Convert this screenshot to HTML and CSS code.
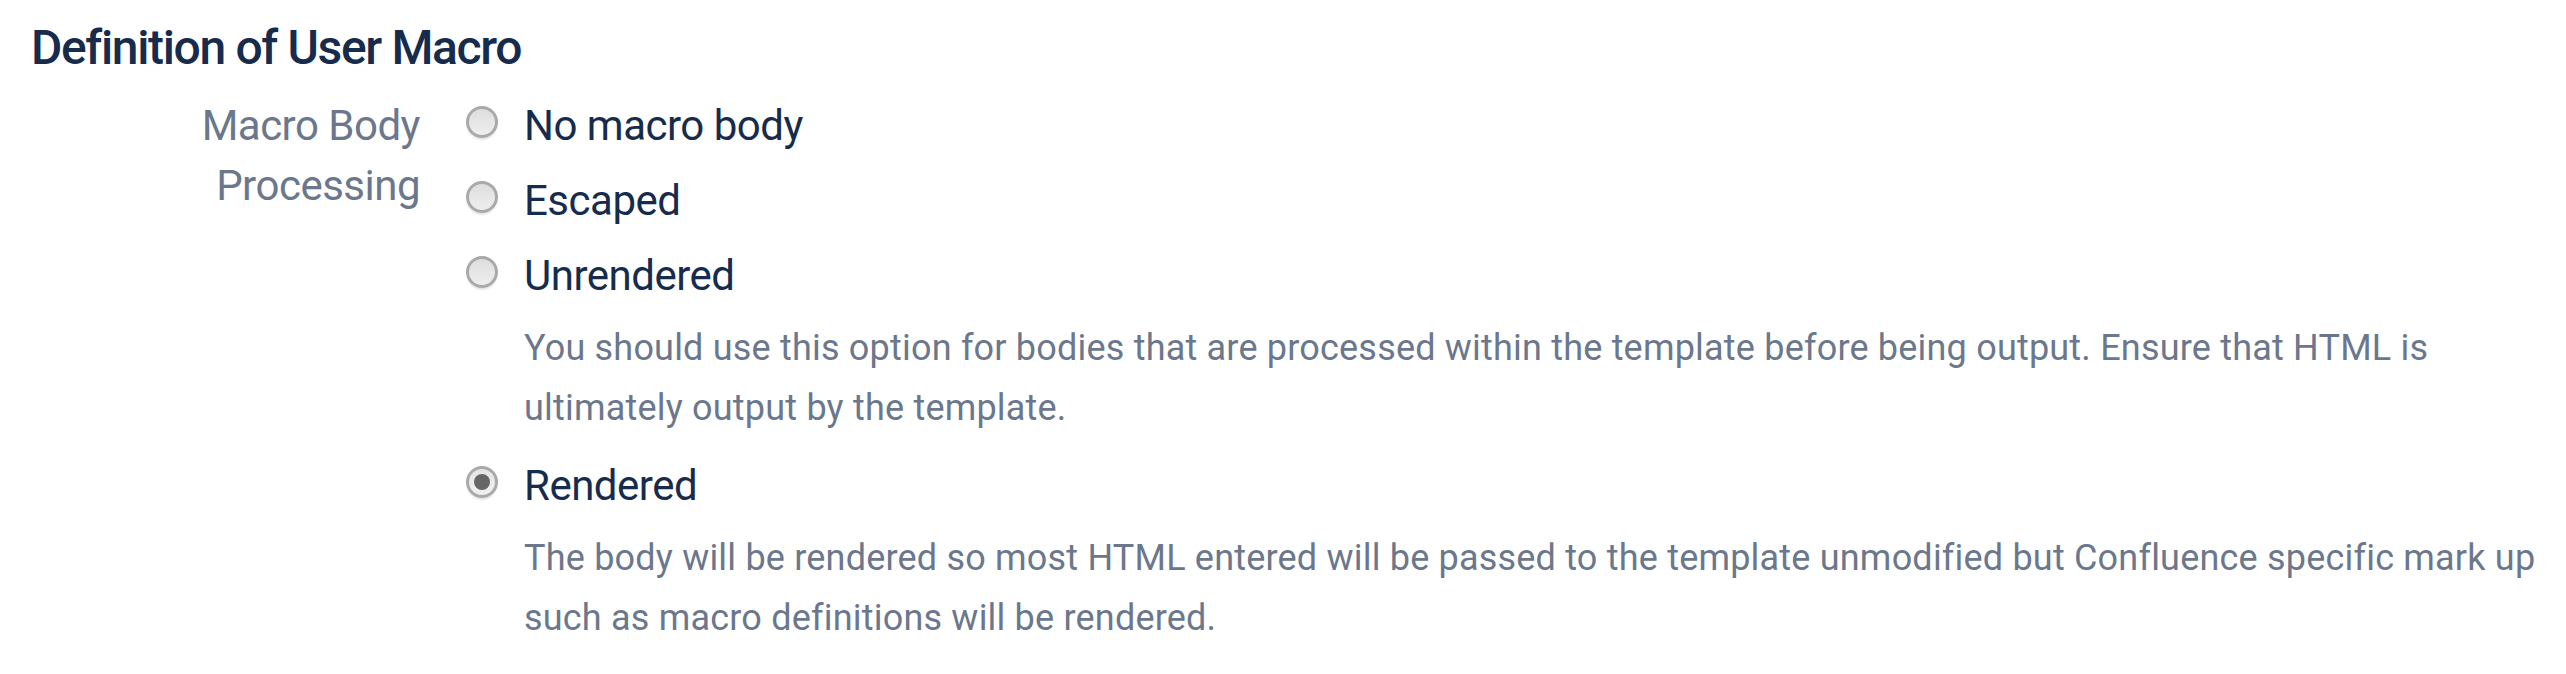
FILE: index.html
```html
<!DOCTYPE html>
<html lang="en">
<head>
<meta charset="utf-8">
<title>Definition of User Macro</title>
<link rel="stylesheet" href="styles.css">
</head>
<body>
<div class="page">
  <h3 class="section-title">Definition of User Macro</h3>
  <div class="field-group">
    <div class="field-label">Macro Body Processing</div>
    <div class="options">
      <div class="option">
        <div class="option-row"><span class="radio"></span><span class="option-text">No macro body</span></div>
      </div>
      <div class="option">
        <div class="option-row"><span class="radio"></span><span class="option-text">Escaped</span></div>
      </div>
      <div class="option">
        <div class="option-row"><span class="radio"></span><span class="option-text">Unrendered</span></div>
        <div class="description">You should use this option for bodies that are processed within the template before being output. Ensure that HTML is ultimately output by the template.</div>
      </div>
      <div class="option">
        <div class="option-row"><span class="radio checked"></span><span class="option-text">Rendered</span></div>
        <div class="description">The body will be rendered so most HTML entered will be passed to the template unmodified but Confluence specific mark up such as macro definitions will be rendered.</div>
      </div>
    </div>
  </div>
</div>
</body>
</html>
```
FILE: styles.css
```css
html, body {
  margin: 0;
  padding: 0;
  background: #ffffff;
}

.page {
  padding: 18px 0 0 31px;
  font-family: Roboto, "Liberation Sans", Arial, sans-serif;
  color: #172B4D;
}

.section-title {
  margin: 0 0 18px 0;
  font-size: 48px;
  line-height: 60px;
  font-weight: 500;
  letter-spacing: -1.35px;
  color: #172B4D;
}

.field-group {
  display: grid;
  grid-template-columns: 389px 1fr;
  column-gap: 46px;
}

.field-label {
  font-size: 42px;
  line-height: 60px;
  letter-spacing: -0.5px;
  color: #6B778C;
  text-align: right;
}

.options {
  display: flex;
  flex-direction: column;
  gap: 15px;
}

.option-row {
  display: flex;
  align-items: flex-start;
  gap: 26px;
}

.radio {
  position: relative;
  flex: none;
  box-sizing: border-box;
  width: 32px;
  height: 32px;
  margin-top: 10px;
  border-radius: 50%;
  border: 3px solid #a9a9a9;
  background: linear-gradient(#dedede, #eeeeee);
  box-shadow: 0 3px 2px -1px #e4e4e4;
}

.radio.checked {
  background: linear-gradient(#e4e4e4, #f0f0f0);
}

.radio.checked::after {
  content: "";
  position: absolute;
  left: 50%;
  top: 50%;
  width: 16px;
  height: 16px;
  margin: -8px 0 0 -8px;
  border-radius: 50%;
  background: #666666;
}

.option-text {
  font-size: 42px;
  line-height: 60px;
  letter-spacing: -0.5px;
  color: #172B4D;
}

.description {
  margin: 12px 0 3px 58px;
  font-size: 36px;
  line-height: 60px;
  letter-spacing: 0.2px;
  color: #6B778C;
}
```
